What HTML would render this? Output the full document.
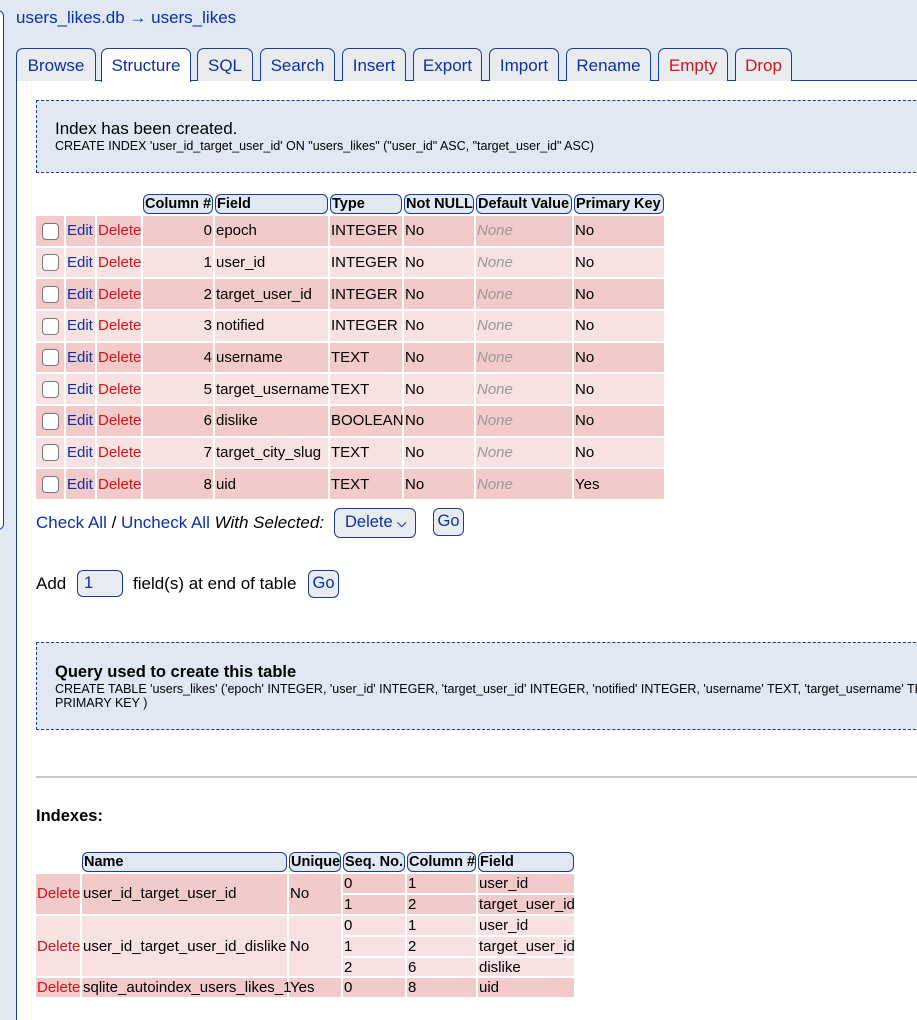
<!DOCTYPE html>
<html><head><meta charset="utf-8">
<style>
*{box-sizing:border-box}
body{margin:0;width:917px;height:1000px;overflow:hidden;background:#dfe8f3;font-family:"Liberation Sans",Arial,sans-serif;color:#000;position:relative}
.abs{position:absolute}
a{color:#0b2fa8;text-decoration:none}
.red{color:#d5121b}
#left{left:-10px;top:10px;width:14px;height:520px;background:#fff;border:1px solid #1a3a9e;border-radius:6px}
#title{left:16px;top:8px;font-size:17px;color:#0b2fa8}
#main{left:16px;top:80px;width:920px;height:940px;background:#fff;border-left:1px solid #1a3a9e;border-top:1px solid #1a3a9e}
.tab{position:absolute;top:48px;height:33px;background:#e9ecef;border:1px solid #1a3a9e;border-bottom:none;border-radius:7px 7px 0 0;font-size:17px;color:#0b2fa8;text-align:center;line-height:34px}
.tab.act{background:#fff;height:34px;z-index:2}
.box{border:1px dashed #1a3a9e;background:#dfe8f3}
table{border-collapse:separate;border-spacing:2px;position:absolute;font-size:15px;table-layout:fixed}
td{padding:0 1px;white-space:nowrap;overflow:visible}
th{background:#dfe8f3;border:1.5px solid #1a3a9e;border-radius:6px;font-size:14.5px;text-align:left;padding:0 1px;height:20px;line-height:16px;white-space:nowrap;overflow:visible}
tr.d td{background:#f2caca}
tr.l td{background:#f8e1e1}
#st tr.d td,#st tr.l td{height:29.67px}
.cb{display:inline-block;width:17px;height:17px;border:1.5px solid #777;border-radius:4px;background:#fff;vertical-align:middle;margin-left:5px}
.none{color:#999;font-style:italic}
#ix tr.d td,#ix tr.l td{height:18.9px;font-size:15px;line-height:17px}
.btn{position:absolute;border:1.5px solid #1a3a9e;border-radius:6px;background:#e9ecef;color:#0b2fa8;font-size:16.5px;text-align:center}
</style></head><body>
<div id="left" class="abs"></div>
<div id="title" class="abs">users_likes.db → users_likes</div>
<div id="main" class="abs"></div>
<div class="tab" style="left:16px;width:80px">Browse</div>
<div class="tab act" style="left:101px;width:90px">Structure</div>
<div class="tab" style="left:197px;width:56px">SQL</div>
<div class="tab" style="left:260px;width:75px">Search</div>
<div class="tab" style="left:342px;width:64px">Insert</div>
<div class="tab" style="left:413px;width:69px">Export</div>
<div class="tab" style="left:489px;width:70px">Import</div>
<div class="tab" style="left:566px;width:85px">Rename</div>
<div class="tab" style="left:658px;width:70px;color:#d5121b">Empty</div>
<div class="tab" style="left:735px;width:57px;color:#d5121b">Drop</div>

<div class="abs box" style="left:36px;top:100px;width:900px;height:73px"></div>
<div class="abs" style="left:55px;top:119px;font-size:17px">Index has been created.</div>
<div class="abs" style="left:55px;top:139px;font-size:12.5px">CREATE INDEX 'user_id_target_user_id' ON "users_likes" ("user_id" ASC, "target_user_id" ASC)</div>

<table id="st" style="left:34px;top:192px;width:612px">
<colgroup><col style="width:28px"><col style="width:29px"><col style="width:44px"><col style="width:70px"><col style="width:113px"><col style="width:72px"><col style="width:70px"><col style="width:96px"><col style="width:90px"></colgroup>
<tr><td></td><td></td><td></td><th>Column #</th><th>Field</th><th>Type</th><th>Not NULL</th><th>Default Value</th><th>Primary Key</th></tr>
<tr class="d"><td><span class="cb"></span></td><td><a>Edit</a></td><td class="red">Delete</td><td style="text-align:right">0</td><td>epoch</td><td>INTEGER</td><td>No</td><td class="none">None</td><td>No</td></tr>
<tr class="l"><td><span class="cb"></span></td><td><a>Edit</a></td><td class="red">Delete</td><td style="text-align:right">1</td><td>user_id</td><td>INTEGER</td><td>No</td><td class="none">None</td><td>No</td></tr>
<tr class="d"><td><span class="cb"></span></td><td><a>Edit</a></td><td class="red">Delete</td><td style="text-align:right">2</td><td>target_user_id</td><td>INTEGER</td><td>No</td><td class="none">None</td><td>No</td></tr>
<tr class="l"><td><span class="cb"></span></td><td><a>Edit</a></td><td class="red">Delete</td><td style="text-align:right">3</td><td>notified</td><td>INTEGER</td><td>No</td><td class="none">None</td><td>No</td></tr>
<tr class="d"><td><span class="cb"></span></td><td><a>Edit</a></td><td class="red">Delete</td><td style="text-align:right">4</td><td>username</td><td>TEXT</td><td>No</td><td class="none">None</td><td>No</td></tr>
<tr class="l"><td><span class="cb"></span></td><td><a>Edit</a></td><td class="red">Delete</td><td style="text-align:right">5</td><td>target_username</td><td>TEXT</td><td>No</td><td class="none">None</td><td>No</td></tr>
<tr class="d"><td><span class="cb"></span></td><td><a>Edit</a></td><td class="red">Delete</td><td style="text-align:right">6</td><td>dislike</td><td>BOOLEAN</td><td>No</td><td class="none">None</td><td>No</td></tr>
<tr class="l"><td><span class="cb"></span></td><td><a>Edit</a></td><td class="red">Delete</td><td style="text-align:right">7</td><td>target_city_slug</td><td>TEXT</td><td>No</td><td class="none">None</td><td>No</td></tr>
<tr class="d"><td><span class="cb"></span></td><td><a>Edit</a></td><td class="red">Delete</td><td style="text-align:right">8</td><td>uid</td><td>TEXT</td><td>No</td><td class="none">None</td><td>Yes</td></tr>
</table>

<div class="abs" style="left:36px;top:513px;font-size:17px"><a>Check All</a> / <a>Uncheck All</a> <i>With Selected:</i></div>
<div class="btn" style="left:334px;top:508px;width:82px;height:30px;line-height:27px;text-align:left;padding-left:10px">Delete <span style="font-size:12px;font-weight:bold">&#x2335;</span></div>
<div class="btn" style="left:433px;top:508px;width:31px;height:28px;line-height:25px">Go</div>

<div class="abs" style="left:36px;top:574px;font-size:17px">Add</div>
<div class="btn" style="left:77px;top:570px;width:46px;height:27px;line-height:24px;text-align:left;padding-left:6px">1</div>
<div class="abs" style="left:133px;top:574px;font-size:17px">field(s) at end of table</div>
<div class="btn" style="left:308px;top:570px;width:31px;height:28px;line-height:25px">Go</div>

<div class="abs box" style="left:36px;top:642px;width:900px;height:88px"></div>
<div class="abs" style="left:55px;top:663px;font-size:16.5px;font-weight:bold">Query used to create this table</div>
<div class="abs" style="left:55px;top:682px;width:862px;overflow:hidden;font-size:12.5px;line-height:14px;white-space:nowrap">CREATE TABLE 'users_likes' ('epoch' INTEGER, 'user_id' INTEGER, 'target_user_id' INTEGER, 'notified' INTEGER, 'username' TEXT, 'target_username' TEXT<br>PRIMARY KEY )</div>

<div class="abs" style="left:36px;top:776px;width:900px;height:2px;background:#c8c8c8"></div>
<div class="abs" style="left:36px;top:807px;font-size:16.5px;font-weight:bold">Indexes:</div>

<table id="ix" style="left:34px;top:850px;width:542px">
<colgroup><col style="width:44px"><col style="width:205px"><col style="width:52px"><col style="width:62px"><col style="width:69px"><col style="width:96px"></colgroup>
<tr><td></td><th>Name</th><th>Unique</th><th>Seq. No.</th><th>Column #</th><th>Field</th></tr>
<tr class="d"><td rowspan="2" class="red">Delete</td><td rowspan="2">user_id_target_user_id</td><td rowspan="2">No</td><td>0</td><td>1</td><td>user_id</td></tr>
<tr class="d"><td>1</td><td>2</td><td>target_user_id</td></tr>
<tr class="l"><td rowspan="3" class="red">Delete</td><td rowspan="3">user_id_target_user_id_dislike</td><td rowspan="3">No</td><td>0</td><td>1</td><td>user_id</td></tr>
<tr class="l"><td>1</td><td>2</td><td>target_user_id</td></tr>
<tr class="l"><td>2</td><td>6</td><td>dislike</td></tr>
<tr class="d"><td class="red">Delete</td><td>sqlite_autoindex_users_likes_1</td><td>Yes</td><td>0</td><td>8</td><td>uid</td></tr>
</table>
</body></html>
